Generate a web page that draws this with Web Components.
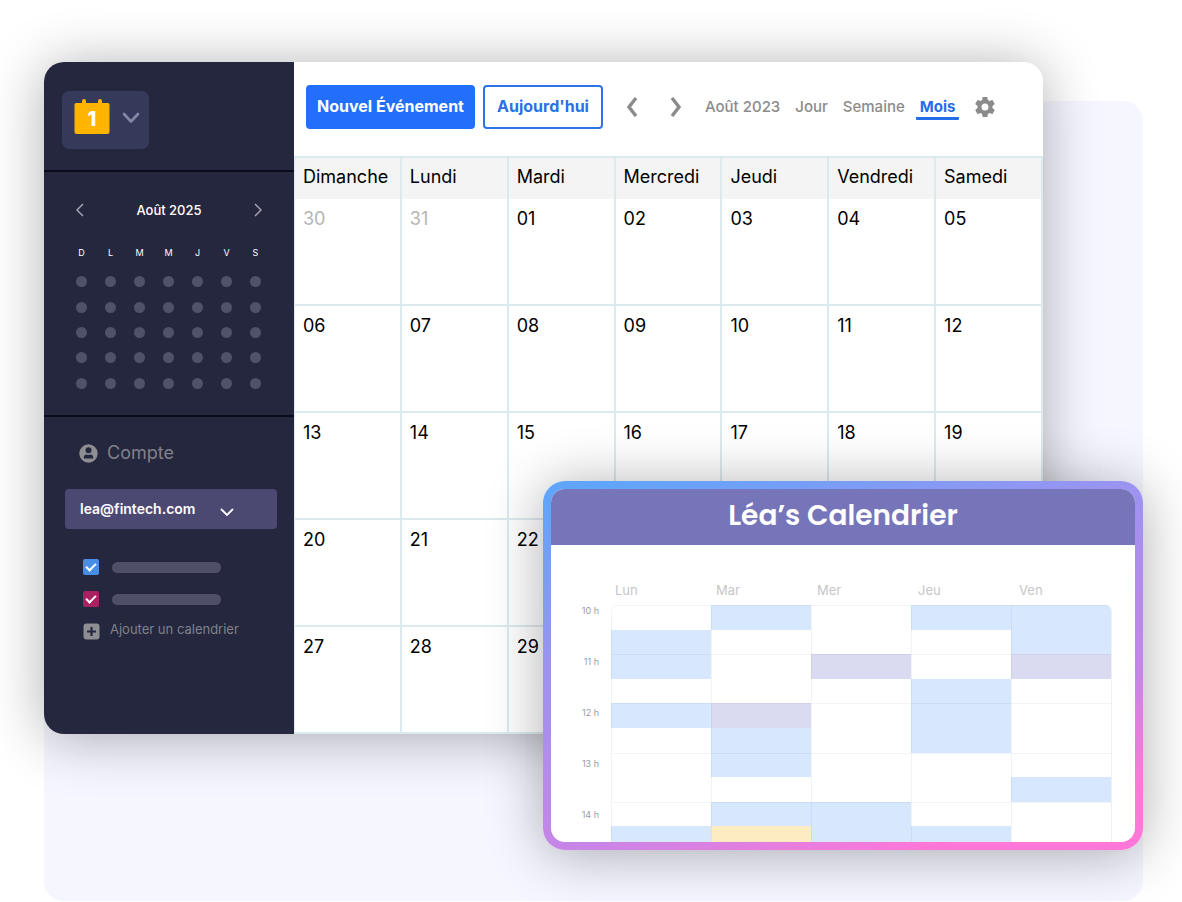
<!DOCTYPE html>
<html lang="fr">
<head>
<meta charset="utf-8">
<meta name="viewport" content="width=device-width, initial-scale=1">
<title>Calendrier</title>
<style>
  body { margin: 0; background: #fff; color: #000; font-family: Inter, "Liberation Sans", sans-serif; }
</style>
</head>
<body>
<calendar-scene>
  <calendar-window>
    <side-bar slot="side">
      <brand-switcher></brand-switcher>
      <mini-month label="Août 2025"></mini-month>
      <account-panel></account-panel>
    </side-bar>
    <tool-bar></tool-bar>
    <month-grid></month-grid>
  </calendar-window>
  <week-card slot="overlay" heading="Léa’s Calendrier"></week-card>
</calendar-scene>

<script>
const define = (name, render) => customElements.define(name, class extends HTMLElement {
  connectedCallback() {
    if (this.shadowRoot) return;
    const template = document.createElement('template');
    template.innerHTML = render(this);
    this.attachShadow({ mode: 'open' }).append(template.content.cloneNode(true));
  }
});

define('calendar-scene', () => `
  <style>
    :host { display: block; padding: 62px 39px 1px 44px; overflow: hidden; }
    .stage { position: relative; display: grid; grid-template-rows: 39px auto; }
    .backdrop { grid-area: 2 / 1; background: #f5f6ff; border-radius: 20px; }
    .main { grid-area: 1 / 1 / 3 / 2; padding: 0 100px 167px 0; position: relative; }
    .overlay { position: absolute; right: 0; bottom: 51px; width: 600px; max-width: 100%; }
  </style>
  <div class="stage">
    <div class="backdrop"></div>
    <div class="main"><slot></slot></div>
    <div class="overlay"><slot name="overlay"></slot></div>
  </div>`);

define('calendar-window', () => `
  <style>
    :host { display: block; border-radius: 20px; box-shadow: 0 4px 56px rgba(0,0,0,.32); }
    .frame { display: grid; grid-template-columns: 250px minmax(0, 1fr); border-radius: 20px; overflow: hidden; background: #fff; }
  </style>
  <div class="frame"><slot name="side"></slot><main><slot></slot></main></div>`);

define('side-bar', () => `
  <style>
    :host { display: block; background: #25273e; color: #fff; }
  </style>
  <slot></slot>`);

define('brand-switcher', () => `
  <style>
    :host { display: block; padding: 29px 18px 21px; border-bottom: 2px solid #0b0c1b; }
    button { display: flex; align-items: center; gap: 12px; width: 87px; height: 58px; padding: 0 8px 6px 12px; border: 0; border-radius: 7px; background: #363a5a; }
    svg { display: block; flex: none; }
    svg + svg { margin-top: 2px; }
    text { font: 800 20px Inter, sans-serif; }
  </style>
  <button type="button" aria-label="Changer de calendrier">
    <svg width="36" height="36" viewBox="0 0 36 36">
      <path d="M2 4H8V2a2 2 0 0 1 4 0V4H24V2a2 2 0 0 1 4 0V4H34a1.500 1.500 0 0 1 1.500 1.500V33a2 2 0 0 1-2 2H2.500a2 2 0 0 1-2-2V5.500A1.500 1.500 0 0 1 2 4Z" fill="#ffb400"/>
      <text x="18" y="27" text-anchor="middle" fill="#fff">1</text>
    </svg>
    <svg width="18" height="12" viewBox="0 0 18 12" fill="none" stroke="#8587a5" stroke-width="2.600" stroke-linecap="round" stroke-linejoin="round"><path d="M2 2 9 9.500 16 2"/></svg>
  </button>`);

define('mini-month', host => `
  <style>
    :host { display: block; padding: 27px 23px 19px; border-bottom: 2px solid #0b0c1b; }
    header { display: flex; align-items: center; justify-content: space-between; height: 22px; }
    h2 { margin: 0; font-size: 13px; line-height: 20px; font-weight: 500; }
    button { width: 26px; height: 22px; padding: 0; border: 0; background: none; display: grid; place-items: center; }
    table { width: 203px; height: 160px; margin: 15px 0 0; border-collapse: collapse; table-layout: fixed; }
    th, td { padding: 0; text-align: center; }
    th { height: 33px; font-size: 9px; font-weight: 400; }
    i { display: block; width: 11px; height: 11px; margin: 0 auto; border-radius: 50%; background: #505269; }
  </style>
  <header>
    <button type="button" aria-label="Mois précédent"><svg width="10" height="14" viewBox="0 0 10 14" fill="none" stroke="#a9aabd" stroke-width="1.400"><path d="M8 1 2 7 8 13"/></svg></button>
    <h2>${host.getAttribute('label')}</h2>
    <button type="button" aria-label="Mois suivant"><svg width="10" height="14" viewBox="0 0 10 14" fill="none" stroke="#a9aabd" stroke-width="1.400"><path d="M2 1 8 7 2 13"/></svg></button>
  </header>
  <table>
    <thead><tr>${[...'DLMMJVS'].map(d => `<th scope="col">${d}</th>`).join('')}</tr></thead>
    <tbody>${`<tr>${'<td><i></i></td>'.repeat(7)}</tr>`.repeat(5)}</tbody>
  </table>`);

define('account-panel', () => `
  <style>
    :host { display: block; padding: 25px 17px 40px 21px; color: #80818b; }
    h2 { display: flex; align-items: center; gap: 9px; margin: 0 0 25px 14px; font-size: 18px; line-height: 22px; font-weight: 400; }
    svg { display: block; }
    .select { display: grid; align-items: center; }
    .select > * { grid-area: 1 / 1; }
    .select svg { margin: 6px 0 0 155px; pointer-events: none; }
    select { appearance: none; width: 100%; height: 40px; padding: 0 15px; border: 0; border-radius: 4px; background: #4b4872; color: #fff; font: 600 14px/20px Inter, sans-serif; }
    label { display: flex; align-items: center; gap: 13px; height: 16px; margin: 0 0 16px 18px; }
    .select + label { margin-top: 30px; }
    input { appearance: none; display: grid; place-items: center; width: 16px; height: 16px; margin: 0; border-radius: 2px; background: #478ee6; }
    input.berry { background: #a92162; }
    input:checked::before { content: ""; width: 8px; height: 4px; margin-bottom: 3px; border: solid #fff; border-width: 0 0 2px 2px; transform: rotate(-45deg); }
    .bar { width: 109px; height: 11px; border-radius: 6px; background: #504f68; }
    .add { display: flex; align-items: flex-start; gap: 10px; margin: -2px 0 0 18px; padding: 0; border: 0; background: none; color: inherit; font: 400 13px/16px Inter, sans-serif; }
    .add svg { margin-top: 2px; }
  </style>
  <h2>
    <svg width="19" height="19" viewBox="0 0 19 19"><circle cx="9.500" cy="9.500" r="9.200" fill="#8d8d92"/><circle cx="9.500" cy="6.300" r="3" fill="#25273e"/><path d="M4.800 14.600v-1.200c0-2 1.300-2.900 2.500-2.900.8.600 3.600.600 4.400 0 1.200 0 2.500.9 2.500 2.900v1.200Z" fill="#25273e"/></svg>
    Compte
  </h2>
  <div class="select">
    <select aria-label="Compte"><option>lea@fintech.com</option></select>
    <svg width="14" height="9" viewBox="0 0 14 9" fill="none" stroke="#fff" stroke-width="1.800" stroke-linecap="round"><path d="M1.500 1.500 7 7 12.500 1.500"/></svg>
  </div>
  <label><input type="checkbox" checked aria-label="Calendrier bleu"><span class="bar"></span></label>
  <label><input class="berry" type="checkbox" checked aria-label="Calendrier rouge"><span class="bar"></span></label>
  <button class="add" type="button">
    <svg width="17" height="17" viewBox="0 0 17 17"><rect x=".5" y=".5" width="16" height="16" rx="3" fill="#8d8d92"/><path d="M8.500 4v9M4 8.500h9" stroke="#25273e" stroke-width="2.200"/></svg>
    Ajouter un calendrier
  </button>`);

define('tool-bar', () => `
  <style>
    :host { display: flex; align-items: center; height: 90px; padding: 0 12px 4px; color: #8b8b8b; font-size: 15px; font-weight: 500; }
    button { flex: none; padding: 0; border: 0; background: none; color: inherit; display: grid; place-items: center; height: 44px; }
    .primary, .outline { border-radius: 4px; padding-bottom: 2px; font: 700 16px/20px Inter, sans-serif; white-space: nowrap; }
    .primary { width: 169px; margin-right: 8px; background: #216ffa; color: #fff; }
    .outline { width: 120px; margin-right: 7px; border: 2px solid #2f73e6; color: #2a70e8; }
    .step { width: 44px; }
    .step + .step { margin-right: 3px; }
    nav { display: flex; gap: 7px; }
    nav > * { padding: 0 4px; line-height: 20px; color: inherit; text-decoration: none; white-space: nowrap; border-bottom: 3px solid transparent; padding-top: 3px; }
    nav .on { color: #246de8; font-weight: 700; border-color: #246de8; border-radius: 1px; }
    .gear { margin-left: 16px; }
    svg { display: block; }
  </style>
  <button class="primary" type="button">Nouvel Événement</button>
  <button class="outline" type="button">Aujourd'hui</button>
  <button class="step" type="button" aria-label="Précédent"><svg width="12" height="20" viewBox="0 0 12 20" fill="none" stroke="#8b8b8b" stroke-width="3.400"><path d="M10 1 3 10 10 19"/></svg></button>
  <button class="step" type="button" aria-label="Suivant"><svg width="12" height="20" viewBox="0 0 12 20" fill="none" stroke="#8b8b8b" stroke-width="3.400"><path d="M2 1 9 10 2 19"/></svg></button>
  <nav>
    <span>Août 2023</span>
    <a href="#jour">Jour</a>
    <a href="#semaine">Semaine</a>
    <a class="on" href="#mois" aria-current="page">Mois</a>
  </nav>
  <button class="gear" type="button" aria-label="Paramètres">
    <svg width="20" height="20" viewBox="2 2 20 20" fill="#8b8b8b"><path d="M19.430 12.980c.04-.32.070-.64.070-.98s-.03-.66-.07-.98l2.110-1.650c.19-.15.240-.42.120-.64l-2-3.460c-.12-.22-.39-.3-.61-.22l-2.490 1c-.52-.4-1.080-.73-1.690-.98l-.38-2.650A.488.488 0 0 0 14 2h-4c-.25 0-.46.180-.49.420l-.38 2.650c-.61.250-1.170.59-1.690.98l-2.490-1c-.23-.09-.49 0-.61.220l-2 3.460c-.13.220-.07.490.12.640l2.110 1.650c-.04.32-.07.650-.07.980s.03.660.070.980l-2.110 1.650c-.19.15-.24.420-.12.640l2 3.460c.12.220.390.300.610.220l2.490-1c.52.400 1.080.730 1.690.980l.38 2.650c.03.240.240.420.490.420h4c.25 0 .46-.18.490-.42l.38-2.650c.61-.25 1.170-.59 1.690-.98l2.490 1c.23.090.490 0 .610-.22l2-3.460c.12-.22.070-.49-.12-.64l-2.110-1.650ZM12 15.500A3.500 3.500 0 1 1 12 8.500a3.500 3.500 0 0 1 0 7Z"/></svg>
  </button>`);

define('month-grid', () => {
  const names = ['Dimanche', 'Lundi', 'Mardi', 'Mercredi', 'Jeudi', 'Vendredi', 'Samedi'];
  // days that the week card covers carry no number
  const covered = n => (n > 22 && n < 27) || n > 29;
  const cell = n => n < 1
    ? `<td class="out">${31 + n}</td>`
    : `<td>${covered(n) ? '' : String(n).padStart(2, '0')}</td>`;
  const rows = [0, 1, 2, 3, 4].map(w =>
    `<tr>${names.map((_, d) => cell(w * 7 + d - 1)).join('')}</tr>`).join('');
  return `
  <style>
    :host { display: block; }
    table { width: 100%; border-spacing: 0; table-layout: fixed; font-size: 18px; line-height: 22px; border-top: 2px solid #dceaf0; border-left: 1px solid #dceaf0; box-sizing: border-box; }
    th, td { box-sizing: border-box; padding: 9px 0 0 8px; text-align: left; vertical-align: top; font-weight: 400; border-right: 2px solid #dceaf0; }
    th { height: 41px; padding-top: 8px; background: #f4f4f4; }
    td { height: 107px; border-bottom: 2px solid #dceaf0; }
    .out { color: #b5b5b5; }
  </style>
  <table>
    <thead><tr>${names.map(n => `<th scope="col">${n}</th>`).join('')}</tr></thead>
    <tbody>${rows}</tbody>
  </table>`;
});

define('week-card', host => {
  const days = ['Lun', 'Mar', 'Mer', 'Jeu', 'Ven'];
  const hours = [10, 11, 12, 13, 14];
  // day, first half-hour row, rows covered, colour
  const events = [
    [1, 2, 2, 'blue'], [1, 5, 1, 'blue'], [1, 10, 1, 'blue'],
    [2, 1, 1, 'blue'], [2, 5, 1, 'violet'], [2, 6, 2, 'blue'], [2, 9, 1, 'blue'], [2, 10, 1, 'amber'],
    [3, 3, 1, 'violet'], [3, 9, 2, 'blue'],
    [4, 1, 1, 'blue'], [4, 4, 3, 'blue'], [4, 10, 1, 'blue'],
    [5, 1, 2, 'blue'], [5, 3, 1, 'violet'], [5, 8, 1, 'blue']
  ];
  const blocks = events.map(([d, r, n, c]) => `<div class="${c}" style="grid-area:${r}/${d}/span ${n}"></div>`).join('');
  const lines = hours.map((_, h) => days.map((_, d) =>
    `<div class="slot" style="grid-area:${h * 2 + 1}/${d + 1}/span 2"></div>`).join('')).join('');
  return `
  <style>
    :host { display: block; padding: 8px; border-radius: 22px; background: linear-gradient(163deg, #60a5fa 4%, #9d93f0 34%, #c785e6 68%, #ff77d8 88%); box-shadow: 0 4px 56px rgba(0,0,0,.32); }
    .inner { overflow: hidden; border-radius: 14px; background: #fff; }
    h2 { margin: 0; height: 56px; background: #7775ba; color: #fff; text-align: center; font: 600 28px/54px Poppins, Inter, sans-serif; }
    .body { display: grid; grid-template-columns: 48px minmax(0, 1fr); column-gap: 12px; padding: 36px 23px 0 0; }
    .days { grid-column: 2; display: grid; grid-template-columns: repeat(5, 1fr); padding-left: 4px; margin-right: -8px; height: 24px; font-size: 13px; line-height: 18px; color: #c6c6c8; }
    .hours { height: 237px; overflow: hidden; text-align: right; font-size: 9px; line-height: 12px; color: #9b9b9f; }
    .hours div { height: 51px; }
    .view { height: 237px; overflow: hidden; }
    .grid { display: grid; grid-template: repeat(10, 1fr) / repeat(5, 1fr); height: 246px; border-right: 1px solid #edf0f4; border-radius: 6px 6px 0 0; overflow: hidden; }
    .slot { border-top: 1px solid rgba(60,90,130,.07); border-left: 1px solid rgba(60,90,130,.07); }
    .slot:nth-child(17) { border-top-left-radius: 6px; }
    .blue { background: #d7e7fe; }
    .violet { background: #dadbf1; }
    .amber { background: #fdecc2; }
  </style>
  <section class="inner">
    <h2>${host.getAttribute('heading')}</h2>
    <div class="body">
      <div class="days">${days.map(d => `<span>${d}</span>`).join('')}</div>
      <div class="hours">${hours.map(h => `<div>${h} h</div>`).join('')}</div>
      <div class="view"><div class="grid">${blocks}${lines}</div></div>
    </div>
  </section>`;
});
</script>
</body>
</html>
